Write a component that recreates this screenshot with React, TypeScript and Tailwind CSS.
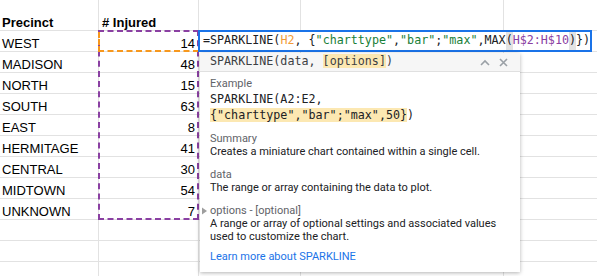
import React from "react";

const rows = [
  ["WEST", "14"],
  ["MADISON", "48"],
  ["NORTH", "15"],
  ["SOUTH", "63"],
  ["EAST", "8"],
  ["HERMITAGE", "41"],
  ["CENTRAL", "30"],
  ["MIDTOWN", "54"],
  ["UNKNOWN", "7"],
  ["", ""],
  ["", ""],
  ["", ""],
];

const mono = { fontFamily: '"DejaVu Sans Mono", "Liberation Mono", monospace' };

const Row = ({ a, b, header = false }: { a: string; b: string; header?: boolean }) => (
  <div className={`flex ${header ? "h-[31px] font-bold" : "h-[21px]"} shrink-0`}>
    <div className="w-[99px] shrink-0 flex items-end pl-[2px] leading-[15px] border-r border-b border-[#e2e2e2]">
      {a}
    </div>
    <div
      className={`w-[100px] shrink-0 flex items-end leading-[15px] border-r border-b border-[#e2e2e2] ${
        header ? "pl-[3px]" : "justify-end pr-[3px]"
      }`}
    >
      {b}
    </div>
    <div className="w-[102px] shrink-0 border-r border-b border-[#e2e2e2]" />
    <div className="w-[203px] shrink-0 border-r border-b border-[#e2e2e2]" />
    <div className="flex-1 border-b border-[#e2e2e2]" />
  </div>
);

export default function App() {
  return (
    <div
      className="relative w-[597px] h-[276px] overflow-hidden bg-white text-[13px] text-black"
      style={{ fontFamily: '"Liberation Sans", Arial, sans-serif' }}
    >
      <div className="flex flex-col">
        <Row a="Precinct" b="# Injured" header />
        {rows.map((r, i) => (
          <Row key={i} a={r[0]} b={r[1]} />
        ))}
      </div>

      {/* range highlights */}
      <div className="absolute left-[98px] top-[30px] w-[101px] h-[190px] border-2 border-dashed border-[#8a40a2]" />
      <div className="absolute left-[98px] top-[32px] w-[101px] h-[20px] border-l-2 border-b-2 border-dashed border-[#f7981d]" />

      {/* formula editor */}
      <div
        className="absolute left-[198px] top-[30px] w-[394px] h-[22px] border-2 border-[#1a73e8] bg-white flex items-center pl-[3px] text-[11.7px] text-[#202124] whitespace-pre"
        style={mono}
      >
        <span>=SPARKLINE(</span>
        <span className="text-[#f29b37]">H2</span>
        <span>, {"{"}</span>
        <span className="text-[#188038]">"charttype"</span>
        <span>,</span>
        <span className="text-[#188038]">"bar"</span>
        <span>;</span>
        <span className="text-[#188038]">"max"</span>
        <span>,MAX</span>
        <span className="bg-[#e3e3e3]">(</span>
        <span className="text-[#8a40a2]">H$2:H$10</span>
        <span className="bg-[#e3e3e3]">)</span>
        <span>{"})"}</span>
      </div>

      {/* help popup */}
      <div className="absolute left-[200px] top-[53px] w-[320px] h-[219px] bg-white shadow-[0_1px_4px_rgba(0,0,0,0.3)]">
        <div className="h-[19px] flex items-center justify-between pl-[10px] pr-[12px] bg-[#f6f6f6] border-b border-[#e0e0e0]">
          <span className="text-[11.7px] text-[#3c4043] whitespace-pre" style={mono}>
            SPARKLINE(data, <span className="bg-[#fce8b2]">[options]</span>)
          </span>
          <div className="flex items-center gap-[9px] text-[#9aa0a6]">
            <svg width="10" height="7" viewBox="0 0 10 7">
              <path d="M1 6 L5 2 L9 6" fill="none" stroke="currentColor" strokeWidth="1.6" />
            </svg>
            <svg width="9" height="9" viewBox="0 0 9 9">
              <path d="M1 1 L8 8 M8 1 L1 8" fill="none" stroke="currentColor" strokeWidth="1.6" />
            </svg>
          </div>
        </div>
        <div
          className="pl-[10px] pt-[5px] text-[11px] leading-[13px] text-[#202124]"
          style={{ fontFamily: "Roboto, Arial, sans-serif" }}
        >
          <div className="text-[#5f6368]">Example</div>
          <div className="mt-[1px] text-[11.7px] leading-[16px] whitespace-pre" style={mono}>
            <div>SPARKLINE(A2:E2,</div>
            <div>
              <span className="bg-[#fce8b2]">{'{"charttype","bar";"max",50}'}</span>)
            </div>
          </div>
          <div className="mt-[9px] text-[#5f6368]">Summary</div>
          <div>Creates a miniature chart contained within a single cell.</div>
          <div className="mt-[10px] text-[#5f6368]">data</div>
          <div>The range or array containing the data to plot.</div>
          <div className="mt-[10px] flex items-center -ml-[9px] text-[#5f6368]">
            <svg width="9" height="8" viewBox="0 0 9 8" className="shrink-0">
              <path d="M1 0.5 L6 4 L1 7.5 Z" fill="#9e9e9e" />
            </svg>
            <span>options - [optional]</span>
          </div>
          <div>A range or array of optional settings and associated values</div>
          <div>used to customize the chart.</div>
          <div className="mt-[7px] text-[#1a73e8]">Learn more about SPARKLINE</div>
        </div>
      </div>
    </div>
  );
}
